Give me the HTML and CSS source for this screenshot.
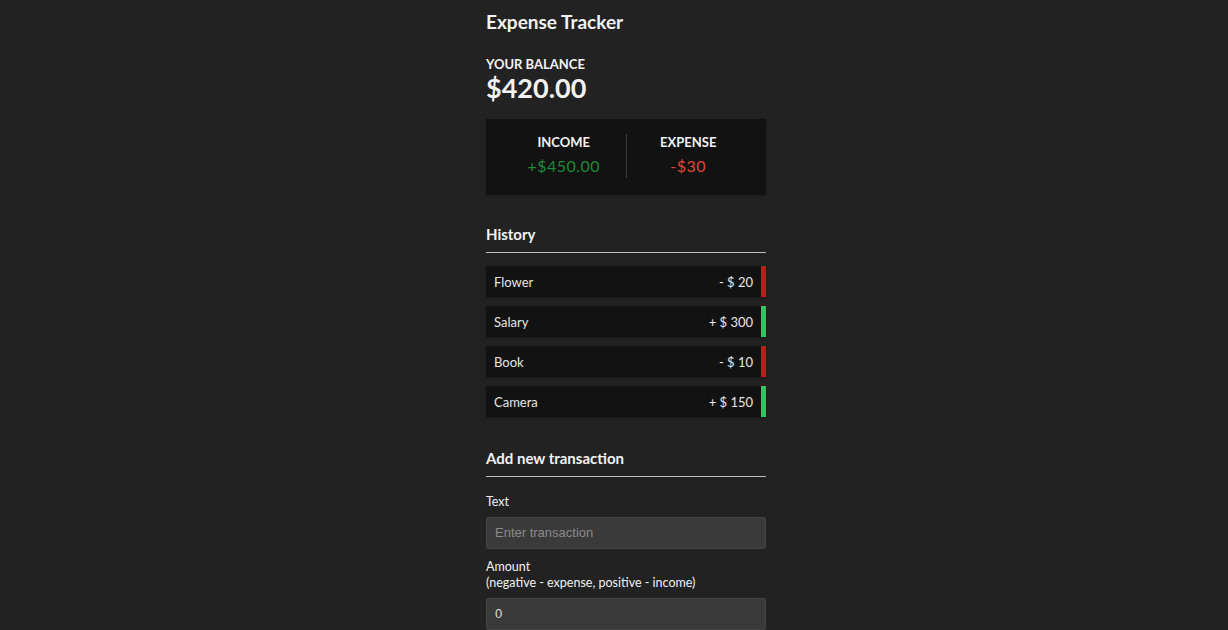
FILE: index.html
```html
<!DOCTYPE html>
<html lang="en">
<head>
<meta charset="utf-8">
<title>Expense Tracker</title>
<link rel="stylesheet" href="styles.css">
</head>
<body>
<div class="container">
  <h2 class="title">Expense Tracker</h2>
  <h4 class="balance-label">Your Balance</h4>
  <h1 class="balance">$420.00</h1>

  <div class="inc-exp">
    <div class="inc-exp-col divided">
      <h4 class="inc-exp-label">Income</h4>
      <p class="money plus">+$450.00</p>
    </div>
    <div class="inc-exp-col">
      <h4 class="inc-exp-label">Expense</h4>
      <p class="money minus">-$30</p>
    </div>
  </div>

  <h3 class="section-title history-title">History</h3>
  <ul class="list">
    <li class="item item-minus"><span>Flower</span><span>- $ 20</span></li>
    <li class="item item-plus"><span>Salary</span><span>+ $ 300</span></li>
    <li class="item item-minus"><span>Book</span><span>- $ 10</span></li>
    <li class="item item-plus"><span>Camera</span><span>+ $ 150</span></li>
  </ul>

  <h3 class="section-title">Add new transaction</h3>
  <form class="form">
    <div class="form-control">
      <label class="label" for="text">Text</label>
      <input class="input" type="text" id="text" placeholder="Enter transaction">
    </div>
    <div class="form-control">
      <label class="label" for="amount">Amount <br>(negative - expense, positive - income)</label>
      <input class="input" type="number" id="amount" value="0">
    </div>
  </form>
</div>
</body>
</html>
```

FILE: styles.css
```css
* { box-sizing: border-box; }

html, body { background: #222222; }

body {
  margin: 0;
  padding: 11px 0 40px 24px;
  font-family: Lato, "Noto Sans", sans-serif;
  color: #f2f2f2;
}

.container {
  width: 280px;
  margin: 0 auto;
  display: flex;
  flex-direction: column;
}

.title {
  margin: 0;
  font-size: 19px;
  font-weight: 700;
  line-height: 1.2;
}

.balance-label {
  margin: 22px 0 0;
  font-size: 13px;
  font-weight: 700;
  text-transform: uppercase;
  line-height: 17px;
}

.balance {
  margin: 0;
  font-size: 27px;
  font-weight: 700;
  line-height: 30px;
}

.inc-exp {
  margin-top: 16px;
  background: #121212;
  box-shadow: 0 1px 3px rgba(0,0,0,0.3);
  padding: 15px 16px 17px;
  display: flex;
}

.inc-exp-col {
  flex: 1;
  text-align: center;
  padding-bottom: 3px;
}

.divided { border-right: 1px solid #3a3a3a; }

.inc-exp-label {
  margin: 0;
  font-size: 13px;
  font-weight: 700;
  text-transform: uppercase;
  line-height: 17px;
}

.money {
  margin: 5px 0 0;
  font-size: 16px;
  line-height: 19px;
  letter-spacing: 0.5px;
}

.plus { color: #1f8a35; }
.minus { color: #e0463a; }

.section-title {
  margin: 32px 0 0;
  padding-bottom: 8px;
  border-bottom: 1px solid #bdbdbd;
  font-size: 15px;
  font-weight: 700;
  line-height: 19px;
}

.history-title { margin-top: 30px; }

.list {
  list-style: none;
  margin: 13px 0 0;
  padding: 0;
  display: flex;
  flex-direction: column;
  gap: 9px;
}

.item {
  height: 31px;
  background: #121212;
  color: #e6e6e6;
  font-size: 13px;
  display: flex;
  justify-content: space-between;
  align-items: center;
  padding: 1px 8px 0;
  box-shadow: 0 1px 3px rgba(0,0,0,0.3);
}

.item-minus { border-right: 5px solid #c8161d; }
.item-plus { border-right: 5px solid #21cc62; }

.form {
  display: flex;
  flex-direction: column;
  gap: 10px;
  margin-top: 17px;
}

.form-control {
  display: flex;
  flex-direction: column;
  gap: 7px;
}

.label {
  font-size: 12.5px;
  line-height: 16px;
  color: #f2f2f2;
}

.input {
  height: 32px;
  width: 100%;
  background: #3a3a3a;
  border: 1px solid #444444;
  border-radius: 2px;
  padding: 0 8px;
  font-family: "Liberation Sans", Arial, sans-serif;
  font-size: 13px;
  color: #dddddd;
  outline: none;
}

.input::placeholder { color: #8a8a8a; }

.input::-webkit-inner-spin-button,
.input::-webkit-outer-spin-button { -webkit-appearance: none; margin: 0; }
```
